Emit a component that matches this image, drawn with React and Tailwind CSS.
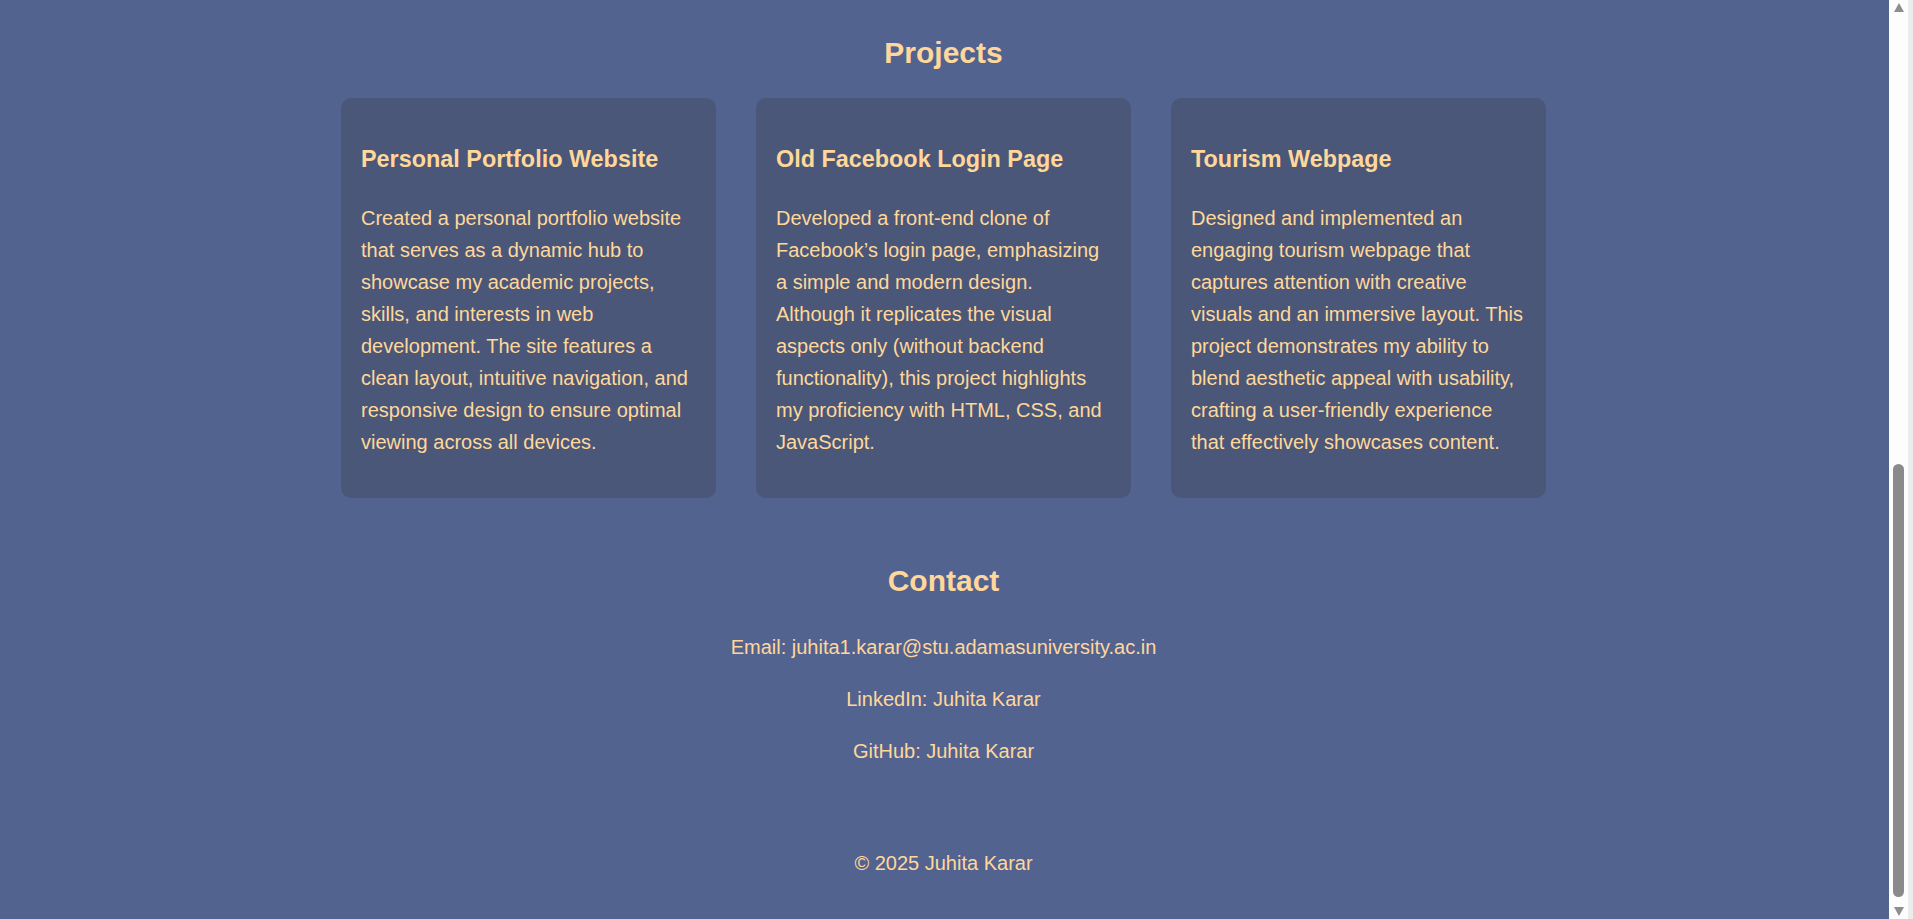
import React from 'react';

const projects = [
    {
        title: 'Personal Portfolio Website',
        text: 'Created a personal portfolio website that serves as a dynamic hub to showcase my academic projects, skills, and interests in web development. The site features a clean layout, intuitive navigation, and responsive design to ensure optimal viewing across all devices.',
    },
    {
        title: 'Old Facebook Login Page',
        text: 'Developed a front-end clone of Facebook\u2019s login page, emphasizing a simple and modern design. Although it replicates the visual aspects only (without backend functionality), this project highlights my proficiency with HTML, CSS, and JavaScript.',
    },
    {
        title: 'Tourism Webpage',
        text: 'Designed and implemented an engaging tourism webpage that captures attention with creative visuals and an immersive layout. This project demonstrates my ability to blend aesthetic appeal with usability, crafting a user-friendly experience that effectively showcases content.',
    },
];

const contacts = [
    'Email: juhita1.karar@stu.adamasuniversity.ac.in',
    'LinkedIn: Juhita Karar',
    'GitHub: Juhita Karar',
];

// Fake browser scrollbar (page is shown scrolled to the bottom)
const ScrollBar = () => (
    <div className="w-[24px] h-full flex shrink-0">
        <div className="w-[19px] h-full bg-[#fdfdfd] flex flex-col items-center">
            <div className="mt-[3px] w-0 h-0 border-l-[5px] border-r-[5px] border-b-[9px] border-l-transparent border-r-transparent border-b-[#8e8e8e]"></div>
            <div className="mt-[452px] w-[11px] h-[433px] rounded-full bg-[#8a8a8a]"></div>
            <div className="mt-[10px] w-0 h-0 border-l-[5px] border-r-[5px] border-t-[9px] border-l-transparent border-r-transparent border-t-[#8e8e8e]"></div>
        </div>
        <div className="w-[5px] h-full bg-[#ececec]"></div>
    </div>
);

const App = () => {
    return (
        <div className="flex h-screen w-full overflow-hidden font-['Liberation_Sans',Arial,sans-serif]">
            <main className="flex-1 h-full bg-[#536390] text-[#ffd79b] pt-[29px] pr-[2px]">
                {/* Projects */}
                <h2 className="text-center text-[30px] font-bold leading-[48px]">Projects</h2>
                <div className="mt-[21px] max-w-[1205px] mx-auto grid grid-cols-3 gap-[40px]">
                    {projects.map(p => (
                        <div key={p.title} className="bg-[#4a5778] rounded-[10px] px-[20px] pt-[20px] pb-[20px]">
                            <h3 className="mt-[23.4px] text-[23.4px] font-bold leading-[37.4px]">{p.title}</h3>
                            <p className="mt-[23.4px] mb-[20px] text-[20px] leading-[32px]">{p.text}</p>
                        </div>
                    ))}
                </div>

                {/* Contact */}
                <h2 className="mt-[59px] text-center text-[30px] font-bold leading-[48px]">Contact</h2>
                <div className="mt-[26px] flex flex-col items-center gap-[20px]">
                    {contacts.map(c => (
                        <p key={c} className="text-[20px] leading-[32px]">{c}</p>
                    ))}
                </div>

                <footer className="mt-[80px] text-center text-[20px] leading-[32px]">&copy; 2025 Juhita Karar</footer>
            </main>
            <ScrollBar />
        </div>
    );
};

export default App;
